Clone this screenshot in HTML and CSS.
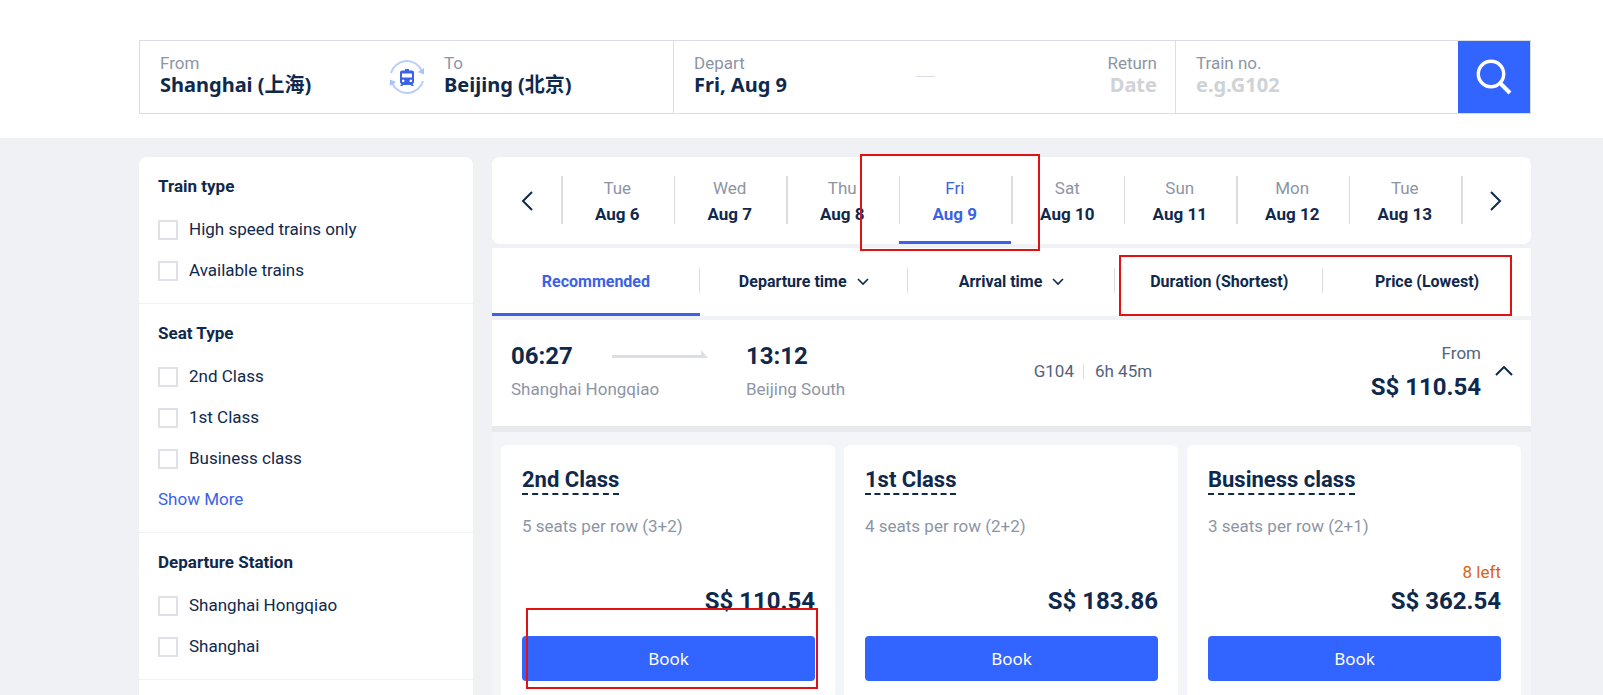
FILE: index.html
```html
<!DOCTYPE html>
<html lang="en">
<head>
<meta charset="utf-8">
<meta name="viewport" content="width=device-width, initial-scale=1">
<title>Shanghai to Beijing trains</title>
<link rel="stylesheet" href="styles.css">
</head>
<body>
<div class="page">
  <header class="header">
    <form class="search">
      <div class="search-group route">
        <div class="field">
          <label for="from">From</label>
          <input id="from" type="text" value="Shanghai (上海)">
        </div>
        <button type="button" class="swap" aria-label="Swap stations">
          <svg viewBox="0 0 36 36" width="36" height="36">
            <g fill="none" stroke="#b7cdfb" stroke-width="2">
              <path d="M2 14A16.500 16.500 0 0 1 33 12"/>
              <path d="M34 22A16.500 16.500 0 0 1 3 24"/>
            </g>
            <path d="M35 9v6.500l-6-2.500z" fill="#a9c3fa"/>
            <path d="M1 27v-6.500l6 2.500z" fill="#a9c3fa"/>
            <path fill="#3c62e8" fill-rule="evenodd" d="M16 10h4v1.500h3a2 2 0 0 1 2 2v9.500a2 2 0 0 1-1.500 1.900l1.500 2.100h-2.500l-.7-1h-7.600l-.7 1h-2.500l1.500-2.100a2 2 0 0 1-1.500-1.900v-9.500a2 2 0 0 1 2-2h3zM13 14.500v4h10v-4zM14.200 20.500a1.300 1.300 0 1 0 .01 0zM21.800 20.500a1.300 1.300 0 1 0 .01 0z"/>
          </svg>
        </button>
        <div class="field">
          <label for="to">To</label>
          <input id="to" type="text" value="Beijing (北京)">
        </div>
      </div>
      <div class="search-group dates">
        <div class="field">
          <label for="depart">Depart</label>
          <input id="depart" type="text" value="Fri, Aug 9">
        </div>
        <span class="dash"></span>
        <div class="field field-end">
          <label for="return">Return</label>
          <input id="return" type="text" placeholder="Date">
        </div>
      </div>
      <div class="search-group number">
        <div class="field">
          <label for="train-no">Train no.</label>
          <input id="train-no" type="text" placeholder="e.g.G102">
        </div>
      </div>
      <button type="submit" class="search-btn" aria-label="Search">
        <svg viewBox="0 0 36 36" width="36" height="36" fill="none" stroke="#fff">
          <circle cx="15" cy="15" r="12.700" stroke-width="3.400"/>
          <path d="M24 24l10 10" stroke-width="4"/>
        </svg>
      </button>
    </form>
  </header>

  <div class="content">
    <aside class="filters">
      <section class="filter">
        <h2>Train type</h2>
        <label><input type="checkbox">High speed trains only</label>
        <label><input type="checkbox">Available trains</label>
      </section>
      <section class="filter">
        <h2>Seat Type</h2>
        <label><input type="checkbox">2nd Class</label>
        <label><input type="checkbox">1st Class</label>
        <label><input type="checkbox">Business class</label>
        <a href="#">Show More</a>
      </section>
      <section class="filter">
        <h2>Departure Station</h2>
        <label><input type="checkbox">Shanghai Hongqiao</label>
        <label><input type="checkbox">Shanghai</label>
      </section>
    </aside>

    <main class="results">
      <nav class="days" aria-label="Travel date">
        <button type="button" class="day-nav" aria-label="Earlier dates">
          <svg viewBox="0 0 12 20" width="12" height="20"><path d="M11 1L2 10l9 9"/></svg>
        </button>
        <button type="button" class="day"><span>Tue</span><b>Aug 6</b></button>
        <button type="button" class="day"><span>Wed</span><b>Aug 7</b></button>
        <button type="button" class="day"><span>Thu</span><b>Aug 8</b></button>
        <button type="button" class="day active"><span>Fri</span><b>Aug 9</b><i class="mark mark-day"></i></button>
        <button type="button" class="day"><span>Sat</span><b>Aug 10</b></button>
        <button type="button" class="day"><span>Sun</span><b>Aug 11</b></button>
        <button type="button" class="day"><span>Mon</span><b>Aug 12</b></button>
        <button type="button" class="day"><span>Tue</span><b>Aug 13</b></button>
        <button type="button" class="day-nav next" aria-label="Later dates">
          <svg viewBox="0 0 12 20" width="12" height="20"><path d="M1 1l9 9-9 9"/></svg>
        </button>
      </nav>

      <div class="sorts">
        <button type="button" class="sort active">Recommended</button>
        <button type="button" class="sort">Departure time
          <svg viewBox="0 0 12 8" width="12" height="8"><path d="M1 1l5 5 5-5"/></svg>
        </button>
        <button type="button" class="sort">Arrival time
          <svg viewBox="0 0 12 8" width="12" height="8"><path d="M1 1l5 5 5-5"/></svg>
        </button>
        <button type="button" class="sort">Duration (Shortest)</button>
        <button type="button" class="sort">Price (Lowest)</button>
        <i class="mark mark-sort"></i>
      </div>

      <article class="train">
        <div class="stop"><b>06:27</b><span>Shanghai Hongqiao</span></div>
        <svg class="arrow" viewBox="0 0 96 8" width="96" height="8"><path d="M0 5h89V0l7 8H0z"/></svg>
        <div class="stop"><b>13:12</b><span>Beijing South</span></div>
        <div class="meta"><span>G104</span><span>6h 45m</span></div>
        <div class="fare"><span>From</span><b>S$ 110.54</b></div>
        <button type="button" class="collapse" aria-label="Hide seat classes">
          <svg viewBox="0 0 18 10" width="18" height="10"><path d="M1 9l8-8 8 8"/></svg>
        </button>
      </article>

      <div class="classes">
        <article class="card">
          <h3>2nd Class</h3>
          <p>5 seats per row (3+2)</p>
          <div class="price"><b>S$ 110.54</b></div>
          <button type="button" class="book">Book</button>
          <i class="mark mark-book"></i>
        </article>
        <article class="card">
          <h3>1st Class</h3>
          <p>4 seats per row (2+2)</p>
          <div class="price"><b>S$ 183.86</b></div>
          <button type="button" class="book">Book</button>
        </article>
        <article class="card">
          <h3>Business class</h3>
          <p>3 seats per row (2+1)</p>
          <div class="price"><span>8 left</span><b>S$ 362.54</b></div>
          <button type="button" class="book">Book</button>
        </article>
      </div>
    </main>
  </div>
</div>
</body>
</html>
```
FILE: styles.css
```css
:root {
  --ink: #0f294d;
  --muted: #8d95a5;
  --slate: #52637c;
  --blue: #3264ff;
  --blue-text: #3b62e6;
  --line: #dadde1;
  --bg: #eff1f5;
}

* { box-sizing: border-box; }

body {
  margin: 0;
  background: var(--bg);
  color: var(--ink);
  font: 17px/20px Roboto, "Liberation Sans", sans-serif;
}

h2, h3, p { margin: 0; }

button {
  border: 0;
  padding: 0;
  background: none;
  color: inherit;
  font: inherit;
}

svg { display: block; }

.page { height: 100vh; overflow: hidden; }

/* Search bar */
.header {
  padding: 40px 72px 24px 139px;
  background: #fff;
}

.search {
  display: grid;
  grid-template-columns: 534fr 502fr 282fr 72px;
  height: 74px;
  border: 1px solid var(--line);
}

.search-group {
  display: flex;
  min-width: 0;
  padding: 12px 19px 0 20px;
  border-right: 1px solid var(--line);
}

.route { padding-right: 0; }
.dates { padding-right: 18px; }
.number { border-right: 0; }

.field {
  display: flex;
  flex: 1;
  flex-direction: column;
  min-width: 0;
  color: var(--muted);
}

.field input {
  width: 100%;
  height: 24px;
  border: 0;
  padding: 0;
  background: none;
  color: var(--ink);
  font: bold 20px/24px "Noto Sans", "Noto Sans CJK SC", sans-serif;
  outline: 0;
}

.field input::placeholder { color: #cfd2d6; opacity: 1; }
.field-end, .field-end input { text-align: right; }

.swap { align-self: flex-start; margin: 6px 19px 0 0; }

.dash {
  width: 19px;
  height: 1px;
  margin-top: 23px;
  background: var(--line);
}

.search-btn {
  display: grid;
  place-items: center;
  background: var(--blue);
}

/* Filters */
.content {
  display: grid;
  grid-template-columns: 334px 1fr;
  gap: 19px;
  padding: 19px 72px 0 139px;
}

.filters {
  border-radius: 8px 8px 0 0;
  background: #fff;
}

.filter {
  display: flex;
  flex-direction: column;
  gap: 20px;
  padding: 19px 19px 22px;
  border-bottom: 1px solid #f1f2f5;
}

.filter h2 {
  margin-bottom: 3px;
  font-size: 17px;
  font-weight: bold;
  line-height: 20px;
}

.filter label {
  display: flex;
  align-items: center;
  gap: 11px;
  line-height: 21px;
}

.filter input {
  appearance: none;
  width: 20px;
  height: 20px;
  margin: 0;
  border: 2px solid #dfe1e6;
  background: #fff;
}

.filter a {
  color: var(--blue-text);
  line-height: 21px;
  text-decoration: none;
}

/* Date strip */
.results {
  display: flex;
  flex-direction: column;
  gap: 4px;
  min-width: 0;
}

.days {
  display: flex;
  height: 87px;
  border-radius: 8px;
  background: #fff;
}

.day-nav {
  display: grid;
  place-items: center;
  width: 69px;
}

.day-nav svg, .sort svg, .collapse svg {
  fill: none;
  stroke: var(--ink);
  stroke-width: 2;
}

.day {
  position: relative;
  display: flex;
  flex: 1;
  flex-direction: column;
  align-items: center;
  gap: 6px;
  padding-top: 1px;
  justify-content: center;
}

.day span { color: var(--muted); }

.day::before, .next::before {
  content: "";
  position: absolute;
  top: 19px;
  left: 0;
  width: 1px;
  height: 48px;
  background: var(--line);
}

.next { position: relative; width: 70px; }
.day:nth-child(even)::before, .next::before { width: 2px; }

.day.active, .day.active span { color: var(--blue-text); }

.day.active::after {
  content: "";
  position: absolute;
  right: 0;
  bottom: 0;
  left: 0;
  height: 3px;
  background: var(--blue-text);
}

/* Sort bar */
.sorts {
  position: relative;
  display: grid;
  grid-template-columns: repeat(5, 1fr);
  height: 68px;
  background: #fff;
}

.sort {
  position: relative;
  display: flex;
  align-items: center;
  justify-content: center;
  gap: 10px;
  font-size: 16px;
  font-weight: bold;
}

.sort svg { stroke-width: 1.6; }

.sort:not(:nth-child(5))::before {
  content: "";
  position: absolute;
  top: 20px;
  right: 0;
  width: 1px;
  height: 25px;
  background: var(--line);
}

.sort.active { color: var(--blue-text); }

.sort.active::after {
  content: "";
  position: absolute;
  right: 0;
  bottom: 0;
  left: 0;
  height: 3px;
  background: var(--blue-text);
}

/* Train summary */
.train {
  display: flex;
  height: 106px;
  padding: 22px 18px 0 19px;
  background: #fff;
}

.stop {
  display: flex;
  flex-direction: column;
  gap: 9px;
  color: var(--muted);
  white-space: nowrap;
}

.stop:first-child { width: 101px; }

.stop b, .fare b, .price b {
  color: var(--ink);
  font-size: 24px;
  line-height: 28px;
}

.arrow { margin: 8px 38px 0 0; fill: #dcdee6; }

.meta {
  display: flex;
  flex: 1;
  justify-content: center;
  margin-top: 19px;
  padding-right: 30px;
  color: var(--slate);
}

.meta span + span {
  position: relative;
  margin-left: 9px;
  padding-left: 12px;
}

.meta span + span::before {
  content: "";
  position: absolute;
  top: 3px;
  left: 0;
  width: 1px;
  height: 15px;
  background: var(--line);
}

.fare {
  display: flex;
  flex-direction: column;
  gap: 10px;
  align-items: flex-end;
  margin-top: 1px;
  color: var(--slate);
}

.collapse {
  align-self: flex-start;
  margin: 24px 0 0 14px;
}

/* Seat classes */
.classes {
  display: grid;
  grid-template-columns: repeat(3, 1fr);
  gap: 9px;
  margin-top: -4px;
  padding: 19px 10px 20px 9px;
  background: #f4f5f9;
  box-shadow: inset 0 6px #e6eaed;
}

.card {
  position: relative;
  display: flex;
  flex-direction: column;
  align-items: flex-start;
  padding: 21px 20px 21px 21px;
  border-radius: 6px;
  background: #fff;
}

.card h3 {
  border-bottom: 2px dashed var(--ink);
  font-size: 22px;
  line-height: 27px;
}

.card p {
  margin-top: 21px;
  color: var(--muted);
}

.price {
  display: flex;
  flex-direction: column;
  justify-content: flex-end;
  gap: 5px;
  align-self: stretch;
  height: 79px;
  color: #dd5f14;
  text-align: right;
}

.book {
  align-self: stretch;
  height: 45px;
  margin-top: 21px;
  border-radius: 4px;
  background: var(--blue);
  color: #fff;
  font: 17px/24px "Noto Sans", sans-serif;
}

/* Red outlines drawn over the page */
.mark {
  position: absolute;
  z-index: 1;
  border: 2px solid #e01212;
  pointer-events: none;
}

.mark-day { top: -3px; right: -29px; bottom: -7px; left: -39px; }
.mark-sort { top: 7px; right: 19px; bottom: 0; left: calc(60% + 4px); }
.mark-book { top: 163px; right: 17px; left: 25px; height: 81px; }
```
